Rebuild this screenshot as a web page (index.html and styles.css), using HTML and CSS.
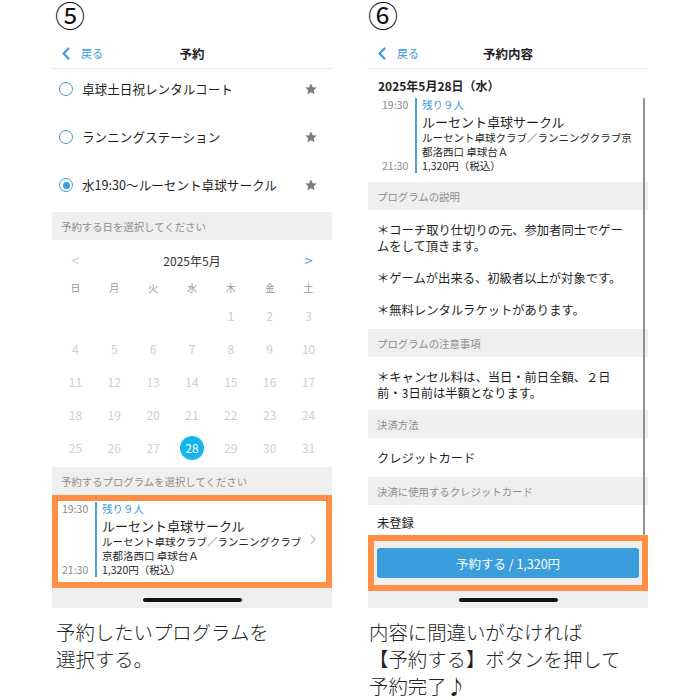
FILE: index.html
```html
<!DOCTYPE html>
<html lang="ja">
<head>
    <meta charset="UTF-8">
    <meta name="viewport" content="width=device-width, initial-scale=1.0">
    <title>予約の流れ</title>
    <link rel="stylesheet" href="styles.css">
</head>
<body>
    <div class="page">

        <!-- ⑤ プログラム選択 -->
        <div class="step">
            <div class="step-num">⑤</div>
            <div class="screen">
                <div class="nav">
                    <span class="back">
                        <svg width="8" height="13" viewBox="0 0 8 13"><path d="M6.5 1.5 L1.5 6.5 L6.5 11.5" fill="none" stroke="#3b9ae1" stroke-width="2.2" stroke-linecap="round" stroke-linejoin="round"/></svg>
                        戻る
                    </span>
                    <span class="nav-title">予約</span>
                </div>

                <ul class="facility-list">
                    <li class="facility">
                        <span class="radio"></span>
                        <span class="facility-name">卓球土日祝レンタルコート</span>
                        <svg class="star" width="14" height="14" viewBox="0 0 24 24"><path d="M12 2l2.9 6.9 7.1.6-5.4 4.7 1.6 7-6.2-3.8-6.2 3.8 1.6-7L2 9.5l7.1-.6z"/></svg>
                    </li>
                    <li class="facility">
                        <span class="radio"></span>
                        <span class="facility-name">ランニングステーション</span>
                        <svg class="star" width="14" height="14" viewBox="0 0 24 24"><path d="M12 2l2.9 6.9 7.1.6-5.4 4.7 1.6 7-6.2-3.8-6.2 3.8 1.6-7L2 9.5l7.1-.6z"/></svg>
                    </li>
                    <li class="facility">
                        <span class="radio is-on"></span>
                        <span class="facility-name">水19:30〜ルーセント卓球サークル</span>
                        <svg class="star" width="14" height="14" viewBox="0 0 24 24"><path d="M12 2l2.9 6.9 7.1.6-5.4 4.7 1.6 7-6.2-3.8-6.2 3.8 1.6-7L2 9.5l7.1-.6z"/></svg>
                    </li>
                </ul>

                <div class="section-head">予約する日を選択してください</div>

                <div class="calendar">
                    <div class="cal-grid cal-month">
                        <span class="cal-prev">&lt;</span>
                        <span class="cal-title">2025年5月</span>
                        <span class="cal-next">&gt;</span>
                    </div>
                    <div class="cal-grid cal-week">
                        <span>日</span><span>月</span><span>火</span><span>水</span><span>木</span><span>金</span><span>土</span>
                    </div>
                    <div class="cal-grid cal-days">
                        <span></span><span></span><span></span><span></span><span>1</span><span>2</span><span>3</span>
                        <span>4</span><span>5</span><span>6</span><span>7</span><span>8</span><span>9</span><span>10</span>
                        <span>11</span><span>12</span><span>13</span><span>14</span><span>15</span><span>16</span><span>17</span>
                        <span>18</span><span>19</span><span>20</span><span>21</span><span>22</span><span>23</span><span>24</span>
                        <span>25</span><span>26</span><span>27</span><span class="is-selected">28</span><span>29</span><span>30</span><span>31</span>
                    </div>
                </div>

                <div class="section-head">予約するプログラムを選択してください</div>

                <div class="highlight">
                    <div class="program program--card">
                        <div class="program-time"><span>19:30</span><span>21:30</span></div>
                        <div class="program-body">
                            <div class="program-left">残り９人</div>
                            <div class="program-name">ルーセント卓球サークル</div>
                            <div class="program-place">ルーセント卓球クラブ／ランニングクラブ京都洛西口 卓球台Ａ</div>
                            <div class="program-price">1,320円（税込）</div>
                        </div>
                        <div class="program-arrow">
                            <svg width="6" height="11" viewBox="0 0 6 11"><path d="M1 1l4 4.5L1 10" fill="none" stroke="#c8c8c8" stroke-width="1.3"/></svg>
                        </div>
                    </div>
                </div>

                <div class="home-bar"><span></span></div>
            </div>
            <p class="caption">予約したいプログラムを<br>選択する。</p>
        </div>

        <!-- ⑥ 予約内容の確認 -->
        <div class="step">
            <div class="step-num step-num--right">⑥</div>
            <div class="screen">
                <div class="nav">
                    <span class="back">
                        <svg width="8" height="13" viewBox="0 0 8 13"><path d="M6.5 1.5 L1.5 6.5 L6.5 11.5" fill="none" stroke="#3b9ae1" stroke-width="2.2" stroke-linecap="round" stroke-linejoin="round"/></svg>
                        戻る
                    </span>
                    <span class="nav-title">予約内容</span>
                </div>

                <div class="detail">
                    <div class="detail-date">2025年5月28日（水）</div>
                    <div class="program program--detail">
                        <div class="program-time"><span>19:30</span><span>21:30</span></div>
                        <div class="program-body">
                            <div class="program-left">残り９人</div>
                            <div class="program-name">ルーセント卓球サークル</div>
                            <div class="program-place">ルーセント卓球クラブ／ランニングクラブ京都洛西口 卓球台Ａ</div>
                            <div class="program-price">1,320円（税込）</div>
                        </div>
                    </div>
                </div>

                <div class="section-head">プログラムの説明</div>
                <div class="text-block">
                    <p>＊コーチ取り仕切りの元、参加者同士でゲー<br>ムをして頂きます。</p>
                    <p>＊ゲームが出来る、初級者以上が対象です。</p>
                    <p>＊無料レンタルラケットがあります。</p>
                </div>

                <div class="section-head">プログラムの注意事項</div>
                <div class="text-block text-block--note">
                    <p>＊キャンセル料は、当日・前日全額、２日<br>前・3日前は半額となります。</p>
                </div>

                <div class="section-head">決済方法</div>
                <div class="text-block">
                    <p>クレジットカード</p>
                </div>

                <div class="section-head">決済に使用するクレジットカード</div>
                <div class="text-block text-block--card">
                    <p>未登録</p>
                </div>

                <div class="highlight highlight--pay">
                    <button class="pay-button">予約する / 1,320円</button>
                </div>

                <div class="home-bar"><span></span></div>
                <div class="scroll-indicator"></div>
            </div>
            <p class="caption caption--right">内容に間違いがなければ<br>【予約する】ボタンを押して<br>予約完了♪</p>
        </div>

    </div>
</body>
</html>
```

FILE: styles.css
```css
body {
    margin: 0;
    background: #fff;
    color: #1f1f1f;
    font-family: "Noto Sans CJK JP", "Liberation Sans", sans-serif;
}

.page {
    display: flex;
    gap: 36px;
    padding-left: 52px;
}

.step {
    width: 280px;
}

.step-num {
    height: 38px;
    padding-left: 3px;
    font-family: "DejaVu Serif", "Noto Sans CJK JP", serif;
    font-size: 30px;
    line-height: 34px;
    color: #111;
}

.step-num--right {
    padding-left: 0;
}

.screen {
    position: relative;
    height: 570px;
    display: flex;
    flex-direction: column;
    overflow: hidden;
    background: #fff;
}

/* ナビゲーション */
.nav {
    height: 30px;
    flex-shrink: 0;
    border-bottom: 1px solid #e6e6e6;
    display: grid;
    grid-template-columns: 1fr auto 1fr;
    align-items: center;
}

.back {
    display: flex;
    align-items: center;
    gap: 11px;
    padding-left: 10px;
    color: #3b9ae1;
    font-size: 11px;
}

.nav-title {
    font-size: 12.5px;
    font-weight: 700;
}

/* 施設リスト */
.facility-list {
    list-style: none;
    margin: 0;
    padding: 0;
}

.facility {
    height: 48px;
    box-sizing: border-box;
    padding: 13px 14px 0 7px;
    display: flex;
    align-items: flex-start;
    font-size: 12.6px;
    line-height: 14px;
}

.facility:last-child {
    height: 47px;
}

.radio {
    width: 14px;
    height: 14px;
    box-sizing: border-box;
    margin: 0 9px 0 0;
    border: 1.5px solid #3b9ae1;
    border-radius: 50%;
    display: flex;
    align-items: center;
    justify-content: center;
}

.radio.is-on::after {
    content: "";
    width: 7px;
    height: 7px;
    border-radius: 50%;
    background: #3b9ae1;
}

.facility-name {
    flex: 1;
}

.star {
    fill: #7b7b7b;
}

/* セクション見出し */
.section-head {
    height: 28px;
    flex-shrink: 0;
    padding-left: 9px;
    display: flex;
    align-items: center;
    background: #efefef;
    color: #8e8e8e;
    font-size: 10.4px;
}

/* カレンダー */
.calendar {
    padding: 7px 4px 3px;
}

.cal-grid {
    display: grid;
    grid-template-columns: repeat(7, 1fr);
    text-align: center;
    align-items: center;
}

.cal-month {
    height: 26px;
    font-size: 12px;
}

.cal-prev {
    color: #cfcfcf;
    font-size: 14px;
}

.cal-title {
    grid-column: 2 / 7;
    color: #333;
}

.cal-next {
    color: #3b9ae1;
    font-size: 14px;
}

.cal-week {
    height: 24px;
    margin-top: 2px;
    font-size: 10px;
    color: #9a9a9a;
}

.cal-days {
    grid-auto-rows: 33px;
    justify-items: center;
    font-size: 12px;
    color: #cfcfcf;
}

.cal-days span {
    width: 24px;
    height: 24px;
    display: flex;
    align-items: center;
    justify-content: center;
}

.cal-days .is-selected {
    border-radius: 50%;
    background: #17b5ec;
    color: #fff;
}

/* 強調枠 */
.highlight {
    flex-shrink: 0;
    border: 6px solid #fe8f45;
    background: #fff;
}

.highlight--pay {
    padding: 7px 3px;
    background: #efefef;
}

.pay-button {
    display: block;
    width: 100%;
    height: 30px;
    border: none;
    border-radius: 3px;
    background: #3a9edd;
    color: #fff;
    font-family: inherit;
    font-size: 12.5px;
}

/* プログラム */
.program {
    display: flex;
}

.program--card {
    padding: 1px 0 5px 4px;
}

.program--detail {
    margin-top: 4px;
    padding-left: 4px;
}

.program-time {
    width: 33px;
    display: flex;
    flex-direction: column;
    justify-content: space-between;
    color: #8a8a8a;
    font-size: 10.5px;
    line-height: 14px;
}

.program-body {
    flex: 1;
    padding-left: 5px;
    border-left: 2px solid #4aa3df;
    font-size: 10.5px;
    line-height: 14px;
}

.program-left {
    color: #3b9ae1;
}

.program-name {
    font-size: 13px;
    line-height: 19px;
}

.program-arrow {
    width: 18px;
    margin-right: 4px;
    display: flex;
    align-items: center;
    justify-content: center;
}

/* 予約内容 */
.detail {
    padding: 9px 11px 9px 10px;
}

.detail-date {
    font-size: 12px;
    font-weight: 700;
    line-height: 16px;
}

.text-block {
    padding: 12px 9px 11px;
    font-size: 12.3px;
    line-height: 16px;
}

.text-block p {
    margin: 0 0 16px;
}

.text-block p:last-child {
    margin-bottom: 0;
}

.text-block--note {
    padding-bottom: 9px;
}

.text-block--card {
    padding: 10px 9px 4px;
}

.home-bar {
    flex: 1;
    padding-bottom: 6px;
    display: flex;
    align-items: flex-end;
    justify-content: center;
    background: #efefef;
}

.home-bar span {
    width: 99px;
    height: 4px;
    border-radius: 2px;
    background: #111;
}

.scroll-indicator {
    position: absolute;
    top: 60px;
    right: 3px;
    width: 2.5px;
    height: 437px;
    border-radius: 2px;
    background: #909090;
}

/* 説明文 */
.caption {
    margin: 0;
    padding: 10px 0 0 4px;
    font-size: 19.4px;
    font-weight: 300;
    line-height: 27px;
    color: #222;
}

.caption--right {
    padding-left: 1px;
}
```
